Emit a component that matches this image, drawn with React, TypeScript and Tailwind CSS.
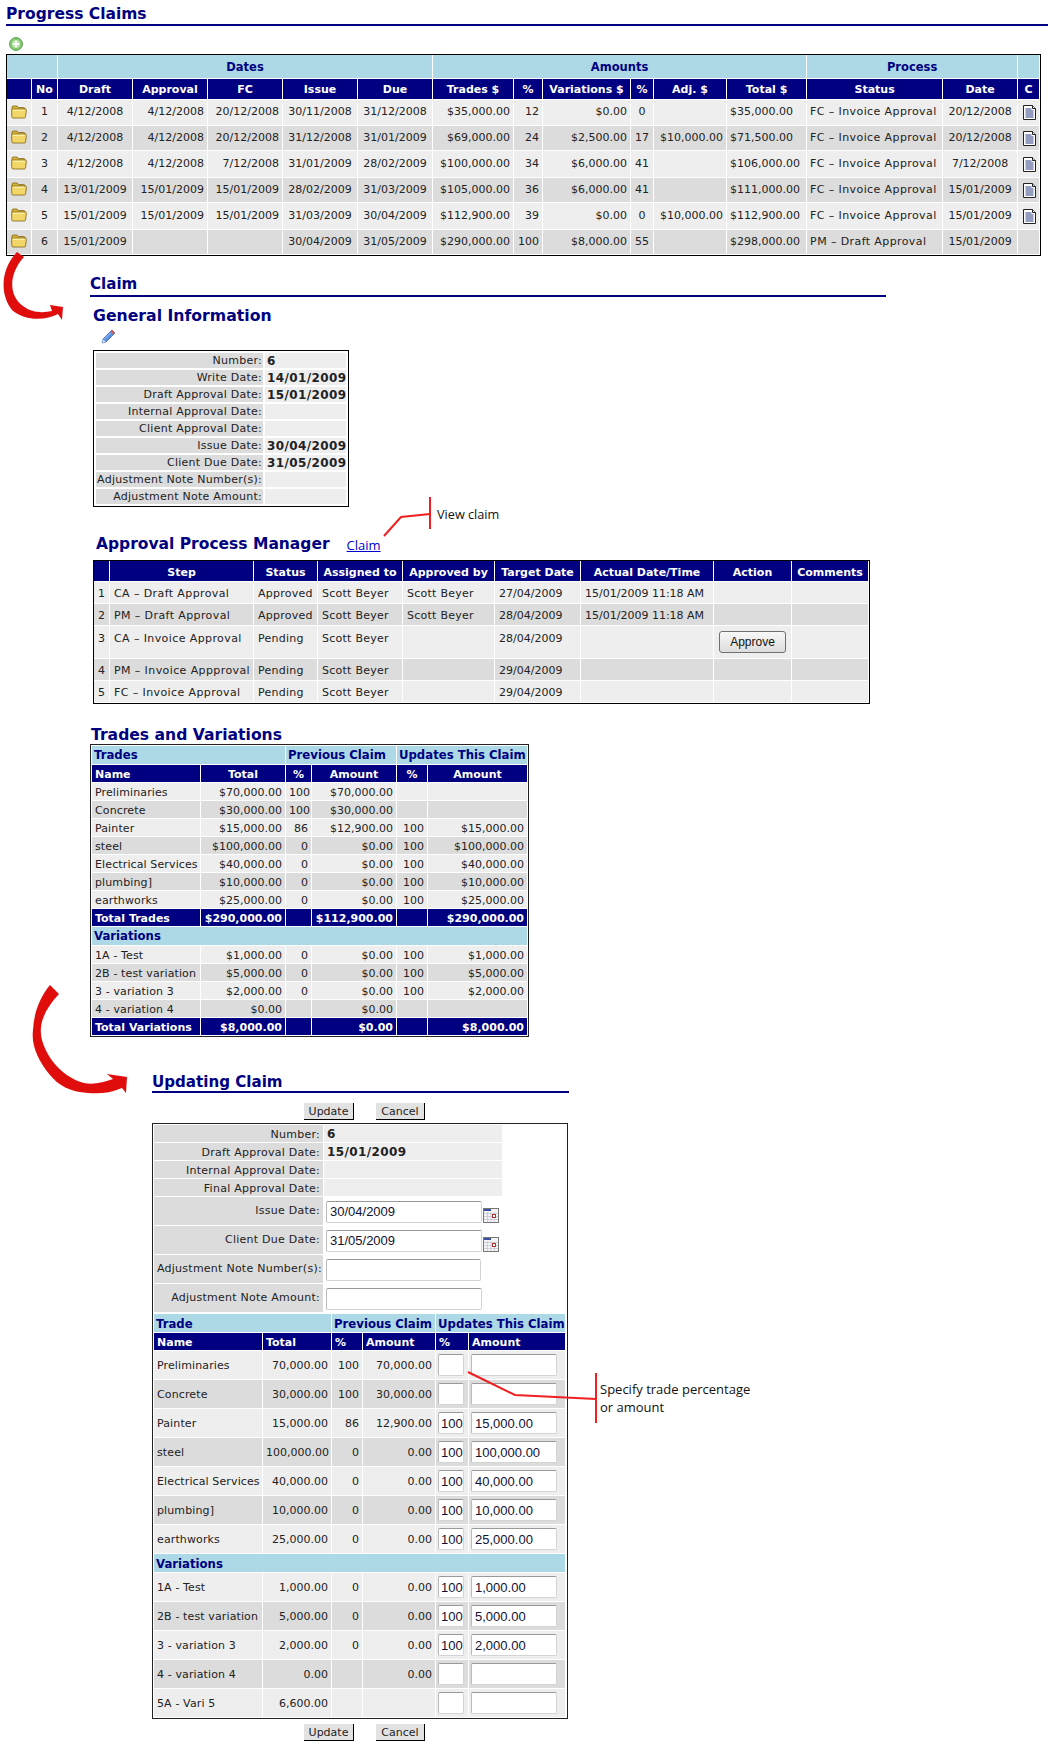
import type { ReactNode } from 'react';

const CLAIMS = [
  ['1', '4/12/2008', '4/12/2008', '20/12/2008', '30/11/2008', '31/12/2008', '$35,000.00', '12', '$0.00', '0', '', '$35,000.00', 'FC – Invoice Approval', '20/12/2008'],
  ['2', '4/12/2008', '4/12/2008', '20/12/2008', '31/12/2008', '31/01/2009', '$69,000.00', '24', '$2,500.00', '17', '$10,000.00', '$71,500.00', 'FC – Invoice Approval', '20/12/2008'],
  ['3', '4/12/2008', '4/12/2008', '7/12/2008', '31/01/2009', '28/02/2009', '$100,000.00', '34', '$6,000.00', '41', '', '$106,000.00', 'FC – Invoice Approval', '7/12/2008'],
  ['4', '13/01/2009', '15/01/2009', '15/01/2009', '28/02/2009', '31/03/2009', '$105,000.00', '36', '$6,000.00', '41', '', '$111,000.00', 'FC – Invoice Approval', '15/01/2009'],
  ['5', '15/01/2009', '15/01/2009', '15/01/2009', '31/03/2009', '30/04/2009', '$112,900.00', '39', '$0.00', '0', '$10,000.00', '$112,900.00', 'FC – Invoice Approval', '15/01/2009'],
  ['6', '15/01/2009', '', '', '30/04/2009', '31/05/2009', '$290,000.00', '100', '$8,000.00', '55', '', '$298,000.00', 'PM – Draft Approval', '15/01/2009'],
];
const CLAIM_COLS = [25, 26, 75, 75, 75, 75, 75, 81, 29, 88, 23, 73, 80, 136, 75, 22];
const CLAIM_HEAD = ['', 'No', 'Draft', 'Approval', 'FC', 'Issue', 'Due', 'Trades $', '%', 'Variations $', '%', 'Adj. $', 'Total $', 'Status', 'Date', 'C'];
// alignment per data column, No through Date
const CLAIM_ALIGN = ['c', 'c', 'r', 'r', 'c', 'c', 'r', 'r', 'r', 'c', 'r', 'l', 'l', 'c'];

const INFO = [
  ['Number:', '6'],
  ['Write Date:', '14/01/2009'],
  ['Draft Approval Date:', '15/01/2009'],
  ['Internal Approval Date:', ''],
  ['Client Approval Date:', ''],
  ['Issue Date:', '30/04/2009'],
  ['Client Due Date:', '31/05/2009'],
  ['Adjustment Note Number(s):', ''],
  ['Adjustment Note Amount:', ''],
];

const STEP_COLS = [16, 144, 64, 85, 92, 86, 133, 78, 77];
const STEPS = [
  ['1', 'CA – Draft Approval', 'Approved', 'Scott Beyer', 'Scott Beyer', '27/04/2009', '15/01/2009 11:18 AM'],
  ['2', 'PM – Draft Approval', 'Approved', 'Scott Beyer', 'Scott Beyer', '28/04/2009', '15/01/2009 11:18 AM'],
  ['3', 'CA – Invoice Approval', 'Pending', 'Scott Beyer', '', '28/04/2009', ''],
  ['4', 'PM – Invoice Appproval', 'Pending', 'Scott Beyer', '', '29/04/2009', ''],
  ['5', 'FC – Invoice Approval', 'Pending', 'Scott Beyer', '', '29/04/2009', ''],
];

const TRADE_COLS = [109, 85, 26, 85, 31, 100];
const TRADES = [
  ['Preliminaries', '$70,000.00', '100', '$70,000.00', '', ''],
  ['Concrete', '$30,000.00', '100', '$30,000.00', '', ''],
  ['Painter', '$15,000.00', '86', '$12,900.00', '100', '$15,000.00'],
  ['steel', '$100,000.00', '0', '$0.00', '100', '$100,000.00'],
  ['Electrical Services', '$40,000.00', '0', '$0.00', '100', '$40,000.00'],
  ['plumbing]', '$10,000.00', '0', '$0.00', '100', '$10,000.00'],
  ['earthworks', '$25,000.00', '0', '$0.00', '100', '$25,000.00'],
];
const VARIATIONS = [
  ['1A - Test', '$1,000.00', '0', '$0.00', '100', '$1,000.00'],
  ['2B - test variation', '$5,000.00', '0', '$0.00', '100', '$5,000.00'],
  ['3 - variation 3', '$2,000.00', '0', '$0.00', '100', '$2,000.00'],
  ['4 - variation 4', '$0.00', '', '$0.00', '', ''],
];

const EDIT_COLS = [109, 69, 31, 73, 33, 97];
const EDIT_TRADES = [
  ['Preliminaries', '70,000.00', '100', '70,000.00', '', ''],
  ['Concrete', '30,000.00', '100', '30,000.00', '', ''],
  ['Painter', '15,000.00', '86', '12,900.00', '100', '15,000.00'],
  ['steel', '100,000.00', '0', '0.00', '100', '100,000.00'],
  ['Electrical Services', '40,000.00', '0', '0.00', '100', '40,000.00'],
  ['plumbing]', '10,000.00', '0', '0.00', '100', '10,000.00'],
  ['earthworks', '25,000.00', '0', '0.00', '100', '25,000.00'],
];
const EDIT_VARIATIONS = [
  ['1A - Test', '1,000.00', '0', '0.00', '100', '1,000.00'],
  ['2B - test variation', '5,000.00', '0', '0.00', '100', '5,000.00'],
  ['3 - variation 3', '2,000.00', '0', '0.00', '100', '2,000.00'],
  ['4 - variation 4', '0.00', '', '0.00', '', ''],
  ['5A - Vari 5', '6,600.00', '', '', '', ''],
];

const rowBg = (i: number) => (i % 2 === 0 ? 'bg-[#eeeeee]' : 'bg-[#dcdcdc]');
const cell = 'border-r border-b border-white px-[3px] font-normal whitespace-nowrap overflow-hidden';
const head = 'border-r border-b border-white px-[3px] bg-[#000080] text-white font-bold whitespace-nowrap overflow-hidden';
const band = 'border-r border-b border-white px-[2px] bg-[#add8e6] text-[#000080] font-bold whitespace-nowrap overflow-hidden';
const wordy = 'tracking-[0.25px]';
const tradeName = 'tracking-[0.12px]';
const stepText = 'tracking-[0.4px]';
const boldDate = 'text-[12px] font-bold tracking-[0.4px]';
const alignOf = (a: string) => (a === 'r' ? 'text-right' : a === 'c' ? 'text-center' : 'text-left');

function Cols({ widths }: { widths: number[] }) {
  return (
    <colgroup>
      {widths.map((w, i) => (
        <col key={i} style={{ width: w }} />
      ))}
    </colgroup>
  );
}

function FolderIcon() {
  return (
    <svg width="16" height="14" viewBox="0 0 16 14" className="block">
      <path d="M1 3V2.200C1 1.500 1.500 1 2.200 1H6l1.500 1.600h5.300c.7 0 1.200.5 1.200 1.200V5H1z" fill="#d9b43a" stroke="#7d6212" strokeWidth=".8" />
      <path d="M.6 5.200C.6 4.500 1 4 1.700 4H14c1 0 1.600.6 1.400 1.500l-.9 6.500c-.1.600-.6 1-1.200 1H2c-.7 0-1.200-.5-1.200-1.200z" fill="#f2d768" stroke="#7d6212" strokeWidth=".8" />
      <path d="M2 5.200h11.500" stroke="#fff6bd" strokeWidth="1" />
    </svg>
  );
}

function DocIcon() {
  return (
    <svg width="13" height="15" viewBox="0 0 13 15" className="block">
      <path d="M.5.5h9l3 3v11H.5z" fill="#fff" stroke="#222" />
      <path d="M2.500 4h6M2.500 6h8M2.500 8h8M2.500 10h8M2.500 12h8" stroke="#2a3a80" strokeWidth="1" />
      <path d="M9.500.5v3h3" fill="#ddd" stroke="#222" />
    </svg>
  );
}

function AddIcon() {
  return (
    <svg width="14" height="14" viewBox="0 0 14 14" className="block">
      <circle cx="7" cy="7" r="6.400" fill="#8fd07a" stroke="#4f9a46" />
      <circle cx="7" cy="7" r="4.600" fill="#b9e6a6" stroke="#6db75e" strokeWidth=".6" />
      <path d="M7 3.800v6.400M3.800 7h6.400" stroke="#fff" strokeWidth="2" />
    </svg>
  );
}

function PencilIcon() {
  return (
    <svg width="15" height="15" viewBox="0 0 15 15" className="block">
      <path d="M11 1l3 3-9 9-4 1 1-4z" fill="#5b8fe0" stroke="#2f55a8" strokeWidth=".7" />
      <path d="M11 1l3 3-1.500 1.500-3-3z" fill="#e05a4a" />
      <path d="M2 10l3 3-4 1z" fill="#c9d6ee" />
      <path d="M9.500 4L3.500 10" stroke="#a9c8f5" strokeWidth="1" />
    </svg>
  );
}

function CalendarIcon() {
  return (
    <svg width="16" height="15" viewBox="0 0 16 15" className="block">
      <rect x=".5" y=".5" width="15" height="14" fill="#f4f4f4" stroke="#777" />
      <rect x="1" y="1" width="7" height="2" fill="#3b4fa0" />
      <path d="M1 5.500h14M1 8.500h14M1 11.500h14M4.500 4v10M8 4v10M11.500 4v10" stroke="#c5c5d8" strokeWidth=".8" />
      <rect x="9.500" y="6.500" width="3" height="3" fill="#fff" stroke="#b03030" />
    </svg>
  );
}

function TextBox({ value = '', width, tight }: { value?: string; width: string; tight?: boolean }) {
  return (
    <input
      readOnly
      value={value}
      className={`${width} ${tight ? 'pr-0 pl-[2px]' : 'px-[3px]'} block h-[22px] rounded-[2px] border border-[#d4d4d4] border-t-[#999999] border-l-[#bbbbbb] bg-white font-['Liberation_Sans',Arial,sans-serif] text-[13px] text-[#111133] outline-none`}
    />
  );
}

function FlatButton({ children }: { children: ReactNode }) {
  return (
    <button className="h-[17px] border-r border-b border-black bg-[#e2e2e2] px-[4px] text-[11px] leading-[17px] text-[#222]">
      {children}
    </button>
  );
}

function FormButtons() {
  return (
    <div className="flex h-[17px] pl-[152px]">
      <div className="ml-[152px] w-[50px]">
        <FlatButton>
          <span className="block w-[41px]">Update</span>
        </FlatButton>
      </div>
      <div className="ml-[22px] w-[50px]">
        <FlatButton>
          <span className="block w-[40px]">Cancel</span>
        </FlatButton>
      </div>
    </div>
  );
}

function TradeRows({ rows, offset = 0 }: { rows: string[][]; offset?: number }) {
  return (
    <>
      {rows.map((r, i) => (
        <tr key={r[0]} className={`h-[18px] ${rowBg(i + offset)}`}>
          <td className={`${cell} pt-[2px] ${tradeName}`}>{r[0]}</td>
          <td className={`${cell} pt-[2px] text-right`}>{r[1]}</td>
          <td className={`${cell} pt-[2px] text-right`}>{r[2]}</td>
          <td className={`${cell} pt-[2px] text-right`}>{r[3]}</td>
          <td className={`${cell} pt-[2px] text-right`}>{r[4]}</td>
          <td className={`${cell} pt-[2px] text-right`}>{r[5]}</td>
        </tr>
      ))}
    </>
  );
}

function TotalRow({ label, values }: { label: string; values: string[] }) {
  return (
    <tr className="h-[18px]">
      <th className={`${head} pt-[2px] text-left`}>{label}</th>
      {values.map((v, i) => (
        <th key={i} className={`${head} pt-[2px] text-right`}>
          {v}
        </th>
      ))}
    </tr>
  );
}

function EditRows({ rows }: { rows: string[][] }) {
  return (
    <>
      {rows.map((r, i) => (
        <tr key={r[0]} className={`h-[29px] ${rowBg(i)}`}>
          <td className={`${cell} ${tradeName}`}>{r[0]}</td>
          <td className={`${cell} text-right`}>{r[1]}</td>
          <td className={`${cell} text-right`}>{r[2]}</td>
          <td className={`${cell} text-right`}>{r[3]}</td>
          <td className={`${cell} !px-[2px]`}>
            <TextBox value={r[4]} width="w-[26px]" tight />
          </td>
          <td className={`${cell} !px-[2px]`}>
            <TextBox value={r[5]} width="w-[86px]" />
          </td>
        </tr>
      ))}
    </>
  );
}

export default function App() {
  return (
    <div className="relative h-[1745px] w-[1048px] overflow-hidden bg-white font-['DejaVu_Sans',Verdana,sans-serif] text-[11px] leading-none text-[#222]">
      {/* progress claims */}
      <div className="ml-[6px] flex h-[26px] w-[1042px] items-end border-b-2 border-[#000080] pb-[2px]">
        <h1 className="text-[15.500px] font-bold text-[#000080]">Progress Claims</h1>
      </div>
      <div className="flex h-[28px] items-start pt-[11px] pl-[9px]">
        <AddIcon />
      </div>
      <div className="ml-[6px] w-[1035px] border border-black">
        <table className="w-[1033px] table-fixed border-separate border-spacing-0">
          <Cols widths={CLAIM_COLS} />
          <thead>
            <tr className="h-[24px]">
              <th colSpan={2} className={band}></th>
              <th colSpan={5} className={`${band} pt-[2px] text-center text-[11.500px]`}>Dates</th>
              <th colSpan={6} className={`${band} pt-[2px] text-center text-[11.500px]`}>Amounts</th>
              <th colSpan={2} className={`${band} pt-[2px] text-center text-[11.500px]`}>Process</th>
              <th className={band}></th>
            </tr>
            <tr className="h-[21px]">
              {CLAIM_HEAD.map((h, i) => (
                <th key={i} className={`${head} text-center`}>{h}</th>
              ))}
            </tr>
          </thead>
          <tbody>
            {CLAIMS.map((row, i) => (
              <tr key={row[0]} className={`${i === 0 ? 'h-[26px]' : i % 2 === 0 ? 'h-[27px]' : 'h-[25px]'} ${rowBg(i)}`}>
                <td className={`${cell} pb-[2px] !pl-[4px]`}>
                  <FolderIcon />
                </td>
                {row.map((v, j) => (
                  <td key={j} className={`${cell} pb-[2px] ${alignOf(CLAIM_ALIGN[j])} ${j === 12 ? stepText : ''}`}>{v}</td>
                ))}
                <td className={`${cell} !pl-[5px]`}>{i < 5 && <DocIcon />}</td>
              </tr>
            ))}
          </tbody>
        </table>
      </div>

      {/* claim */}
      <div className="ml-[90px] flex h-[41px] w-[796px] items-end border-b-2 border-[#000080] pb-[3px]">
        <h2 className="text-[15.100px] font-bold text-[#000080]">Claim</h2>
      </div>
      <h2 className="mt-[11px] ml-[93px] h-[20px] text-[15.700px] font-bold text-[#000080]">General Information</h2>
      <div className="h-[22px] pt-[1px] pl-[101px]">
        <PencilIcon />
      </div>
      <div className="ml-[93px] w-[256px] border border-black pt-[2px] pl-[2px]">
        <table className="w-[250px] table-fixed border-separate border-spacing-0">
          <Cols widths={[169, 81]} />
          <tbody>
            {INFO.map(([label, value]) => (
              <tr key={label} className="h-[17px]">
                <td className={`border-r-2 border-b-2 border-white bg-[#dcdcdc] pr-[1px] text-right whitespace-nowrap ${wordy}`}>{label}</td>
                <td className={`border-b-2 border-white bg-[#eeeeee] pl-[2px] whitespace-nowrap ${boldDate}`}>{value}</td>
              </tr>
            ))}
          </tbody>
        </table>
      </div>

      {/* approvals */}
      <div className="flex h-[53px] items-end pb-[8px] pl-[96px]">
        <h2 className="text-[15.500px] font-bold text-[#000080]">Approval Process Manager</h2>
        <a href="#claim" className="ml-[17px] font-['Open_Sans',sans-serif] text-[13px] text-[#0000cc] underline">
          Claim
        </a>
      </div>
      <div className="ml-[93px] w-[777px] border border-black">
        <table className="w-[775px] table-fixed border-separate border-spacing-0">
          <Cols widths={STEP_COLS} />
          <thead>
            <tr className="h-[21px]">
              {['', 'Step', 'Status', 'Assigned to', 'Approved by', 'Target Date', 'Actual Date/Time', 'Action', 'Comments'].map((h) => (
                <th key={h} className={`${head} pt-[2px] text-center`}>{h}</th>
              ))}
            </tr>
          </thead>
          <tbody>
            {STEPS.map((row, i) => (
              <tr key={row[0]} className={`${i === 2 ? 'h-[33px]' : 'h-[22px]'} ${rowBg(i)}`}>
                {row.map((v, j) => (
                  <td key={j} className={`${cell} ${i === 2 ? 'pt-[7px] align-top' : 'pt-[2px]'} ${j === 0 ? 'text-center' : '!pl-[4px]'} ${j === 1 ? stepText : j < 5 ? wordy : ''}`}>{v}</td>
                ))}
                <td className={`${cell} text-center`}>
                  {i === 2 && (
                    <button className="mx-auto block h-[22px] w-[67px] rounded-[3px] border border-[#707070] bg-gradient-to-b from-[#f8f8f8] to-[#dddddd] font-['Liberation_Sans',Arial,sans-serif] text-[12px] text-[#111]">
                      Approve
                    </button>
                  )}
                </td>
                <td className={cell}></td>
              </tr>
            ))}
          </tbody>
        </table>
      </div>

      {/* trades and variations */}
      <div className="flex h-[40px] items-end pl-[91px]">
        <h2 className="text-[15.600px] font-bold text-[#000080]">Trades and Variations</h2>
      </div>
      <div className="ml-[90px] w-[439px] border border-[#222] pt-px pl-px">
        <table className="w-[436px] table-fixed border-separate border-spacing-0">
          <Cols widths={TRADE_COLS} />
          <thead>
            <tr className="h-[19px] text-[11.700px]">
              <th colSpan={2} className={`${band} pt-[2px] text-left`}>Trades</th>
              <th colSpan={2} className={`${band} pt-[2px] text-left`}>Previous Claim</th>
              <th colSpan={2} className={`${band} pt-[2px] text-left`}>Updates This Claim</th>
            </tr>
            <tr className="h-[18px]">
              <th className={`${head} pt-[2px] text-left`}>Name</th>
              <th className={`${head} pt-[2px] text-center`}>Total</th>
              <th className={`${head} pt-[2px] text-center`}>%</th>
              <th className={`${head} pt-[2px] text-center`}>Amount</th>
              <th className={`${head} pt-[2px] text-center`}>%</th>
              <th className={`${head} pt-[2px] text-center`}>Amount</th>
            </tr>
          </thead>
          <tbody>
            <TradeRows rows={TRADES} />
            <TotalRow label="Total Trades" values={['$290,000.00', '', '$112,900.00', '', '$290,000.00']} />
            <tr className="h-[19px] text-[11.700px]">
              <th colSpan={6} className={`${band} pt-[2px] text-left`}>Variations</th>
            </tr>
            <TradeRows rows={VARIATIONS} />
            <TotalRow label="Total Variations" values={['$8,000.00', '', '$0.00', '', '$8,000.00']} />
          </tbody>
        </table>
      </div>

      {/* updating claim */}
      <div className="ml-[152px] flex h-[56px] w-[417px] items-end border-b-2 border-[#000080] pb-[1px]">
        <h2 className="text-[15.100px] font-bold text-[#000080]">Updating Claim</h2>
      </div>
      <div className="h-[10px]"></div>
      <FormButtons />
      <div className="h-[3px]"></div>
      <div className="ml-[152px] w-[416px] border border-[#222] pt-px pl-px">
        <table className="w-[348px] table-fixed border-separate border-spacing-0">
          <Cols widths={[170, 178]} />
          <tbody>
            {[
              ['Number:', '6'],
              ['Draft Approval Date:', '15/01/2009'],
              ['Internal Approval Date:', ''],
              ['Final Approval Date:', ''],
            ].map(([label, value]) => (
              <tr key={label} className="h-[18px]">
                <td className={`${cell} ${wordy} bg-[#dcdcdc] pt-[2px] text-right`}>{label}</td>
                <td className={`border-b border-white bg-[#eeeeee] px-[3px] pt-[1px] ${boldDate}`}>{value}</td>
              </tr>
            ))}
            {[
              ['Issue Date:', '30/04/2009', true, 'w-[156px]'],
              ['Client Due Date:', '31/05/2009', true, 'w-[156px]'],
              ['Adjustment Note Number(s):', '', false, 'w-[155px]'],
              ['Adjustment Note Amount:', '', false, 'w-[156px]'],
            ].map(([label, value, cal, w]) => (
              <tr key={label as string} className="h-[29px]">
                <td className={`${cell} ${wordy} bg-[#dcdcdc] pb-[1px] text-right`}>{label}</td>
                <td className="px-[2px]">
                  <div className="flex items-start gap-px">
                    <TextBox value={value as string} width={w as string} />
                    {cal && (
                      <div className="pt-[7px]">
                        <CalendarIcon />
                      </div>
                    )}
                  </div>
                </td>
              </tr>
            ))}
          </tbody>
        </table>
        <table className="mt-px w-[412px] table-fixed border-separate border-spacing-0">
          <Cols widths={EDIT_COLS} />
          <thead>
            <tr className="h-[19px] text-[11.700px]">
              <th colSpan={2} className={`${band} pt-[3px] text-left`}>Trade</th>
              <th colSpan={2} className={`${band} pt-[3px] text-left`}>Previous Claim</th>
              <th colSpan={2} className={`${band} pt-[3px] text-left`}>Updates This Claim</th>
            </tr>
            <tr className="h-[18px]">
              {['Name', 'Total', '%', 'Amount', '%', 'Amount'].map((h, i) => (
                <th key={i} className={`${head} pt-[2px] text-left`}>{h}</th>
              ))}
            </tr>
          </thead>
          <tbody>
            <EditRows rows={EDIT_TRADES} />
            <tr className="h-[19px] text-[11.700px]">
              <th colSpan={6} className={`${band} pt-[3px] text-left`}>Variations</th>
            </tr>
            <EditRows rows={EDIT_VARIATIONS} />
          </tbody>
        </table>
      </div>
      <div className="h-[5px]"></div>
      <FormButtons />

      {/* annotations drawn over the page */}
      <svg width="1048" height="1745" className="pointer-events-none absolute top-0 left-0">
        <path d="M17 252L24 257C10 272 7 294 23 306C32 313 43 313 52 311L50 305L63 307L62 320L58 314C45 321 25 321 12 310C0 295 0 270 17 252Z" fill="#e00d0d" />
        <path d="M50 985L59 994C44 1010 38 1025 42 1040C47 1058 62 1077 84 1083C94 1085 104 1082 113 1079L107 1074L127 1077L126 1093L122 1088C110 1093 100 1094 88 1093C70 1092 58 1085 50 1075C38 1060 31 1045 33 1030C34 1012 40 997 50 985Z" fill="#e00d0d" />
        <path d="M430 497V529" stroke="#f02020" strokeWidth="2" fill="none" />
        <path d="M430 514L401 517L384 536" stroke="#f02020" strokeWidth="2" fill="none" />
        <path d="M596 1373V1423" stroke="#f02020" strokeWidth="2" fill="none" />
        <path d="M596 1399L515 1395L468 1372" stroke="#f02020" strokeWidth="2" fill="none" />
      </svg>
      <div className="absolute top-[507px] left-[437px] font-['Open_Sans',sans-serif] text-[12.700px] leading-[15px] text-[#111]">View claim</div>
      <div className="absolute top-[1381px] left-[600px] font-['Open_Sans',sans-serif] text-[13px] leading-[17.500px] text-[#111]">
        Specify trade percentage
        <br />
        or amount
      </div>
    </div>
  );
}
